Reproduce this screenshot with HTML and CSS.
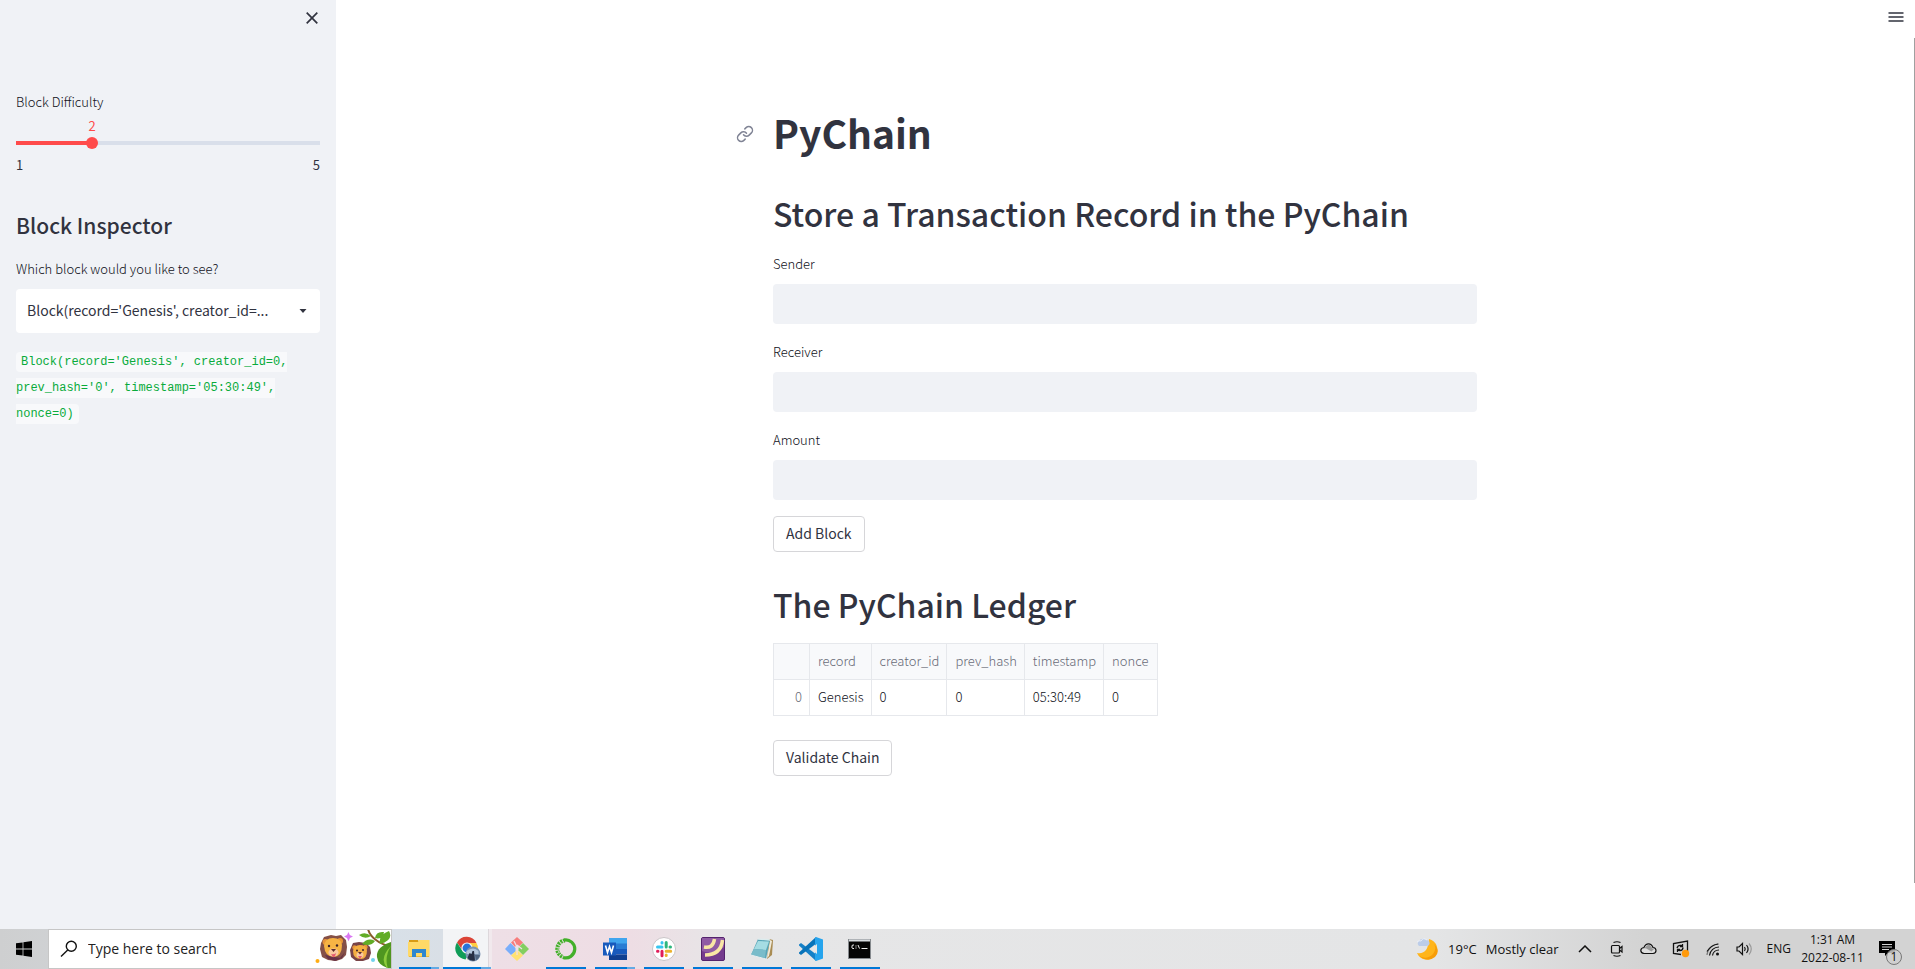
FILE: index.html
```html
<!DOCTYPE html>
<html lang="en">
<head>
<meta charset="utf-8">
<title>PyChain</title>
<link rel="stylesheet" href="styles.css">
</head>
<body>
<div class="app">
  <aside class="sidebar">
    <div class="sidebar-top">
      <button class="icon-button" aria-label="Close sidebar"><svg width="12" height="12" viewBox="0 0 12 12" fill="none" stroke="#31333f" stroke-width="1.7"><path d="M.7.7l10.6 10.6M11.3.7L.7 11.3"/></svg></button>
    </div>
    <label class="label" for="difficulty">Block Difficulty</label>
    <output class="slider-value" for="difficulty" style="width:50%">2</output>
    <div class="slider"><input id="difficulty" type="range" min="1" max="5" value="2"></div>
    <div class="slider-ticks"><span>1</span><span>5</span></div>
    <h2 class="sidebar-title">Block Inspector</h2>
    <label class="label" for="block">Which block would you like to see?</label>
    <div class="select-box">
      <select id="block"><option label="Block(record='Genesis', creator_id=...">Block(record='Genesis', creator_id=0, prev_hash='0', timestamp='05:30:49', nonce=0)</option></select>
      <svg class="caret" width="8" height="4" viewBox="0 0 8 4"><path d="M.5 0h7L4 4z" fill="#31333f"/></svg>
    </div>
    <p class="block-text"><code>Block(record='Genesis', creator_id=0, prev_hash='0', timestamp='05:30:49', nonce=0)</code></p>
  </aside>
  <main class="main">
    <button class="icon-button menu" aria-label="Menu"><svg width="16" height="12" viewBox="0 0 16 12" fill="none" stroke="#31333f" stroke-width="1.6"><path d="M.5 2h15M.5 6h15M.5 10h15"/></svg></button>
    <div class="scrollbar"></div>
    <div class="content">
      <h1 class="title"><a class="anchor" href="#pychain" aria-label="Link to heading"><svg width="18" height="18" viewBox="0 0 24 24" fill="none" stroke="#808495" stroke-width="2" stroke-linecap="round" stroke-linejoin="round"><path d="M10 13a5 5 0 0 0 7.54.54l3-3a5 5 0 0 0-7.07-7.07l-1.72 1.71"/><path d="M14 11a5 5 0 0 0-7.54-.54l-3 3a5 5 0 0 0 7.07 7.07l1.71-1.71"/></svg></a>PyChain</h1>
      <h2 class="heading">Store a Transaction Record in the PyChain</h2>
      <form class="form">
        <div class="field"><label class="label" for="sender">Sender</label><input id="sender" type="text"></div>
        <div class="field"><label class="label" for="receiver">Receiver</label><input id="receiver" type="text"></div>
        <div class="field"><label class="label" for="amount">Amount</label><input id="amount" type="text"></div>
        <button class="button" type="button">Add Block</button>
      </form>
      <h2 class="heading">The PyChain Ledger</h2>
      <table class="ledger">
        <thead><tr><th class="index"></th><th>record</th><th>creator_id</th><th>prev_hash</th><th>timestamp</th><th class="last">nonce</th></tr></thead>
        <tbody><tr><th class="index">0</th><td>Genesis</td><td>0</td><td>0</td><td>05:30:49</td><td class="last">0</td></tr></tbody>
      </table>
      <button class="button" type="button">Validate Chain</button>
    </div>
  </main>
</div>
<footer class="taskbar">
  <button class="start" aria-label="Start"><svg width="16" height="16" viewBox="0 0 16 16"><path d="M0 2.3L6.6 1.4v6.2H0zM7.4 1.3L16 0v7.6H7.4zM0 8.4h6.6v6.2L0 13.7zM7.4 8.4H16V16l-8.6-1.3z"/></svg></button>
  <div class="search">
    <svg width="18" height="18" viewBox="0 0 18 18" fill="none" stroke="#111" stroke-width="1.4"><circle cx="11.3" cy="6.3" r="5"/><path d="M7.7 9.9L1 16.6"/></svg>
    <input type="text" aria-label="Search" placeholder="Type here to search">
    <svg class="lions" width="76" height="40" viewBox="0 0 76 40">
      <path d="M9 8l7-2 5 1 5-1 5 5 1 7-1 8-4 4-6 2-8-1-6-3-2-8 1-6z" fill="#855047"/>
      <path d="M10 26l3 4 7 2 7-3 3-6-5 6z" fill="#673247"/>
      <circle cx="10.500" cy="13" r="3" fill="#e8953a"/><circle cx="25" cy="12" r="3" fill="#e8953a"/>
      <path d="M9 17q1-8 9-8t9 7q0 11-8 12-9 0-10-11z" fill="#f7b444"/>
      <ellipse cx="18.500" cy="23.500" rx="5" ry="4" fill="#f9c9a1"/><path d="M16 20h5l-2.500 3z" fill="#5c2b2b"/><path d="M16 25q3 1 5-1-1 5-3 4z" fill="#e65c71"/>
      <circle cx="14" cy="17" r="1.200" fill="#3b2028"/><circle cx="22" cy="16.500" r="1.200" fill="#3b2028"/>
      <path d="M38 14l6-1 7 1 4 4 1 6-2 6-6 2-7 0-5-4-1-7z" fill="#794447"/>
      <circle cx="39.500" cy="18.500" r="2.200" fill="#e8953a"/><circle cx="50.500" cy="18" r="2.200" fill="#e8953a"/>
      <path d="M38 22q1-6 7-6t7 5q0 9-6 9-8 0-8-8z" fill="#f4ae42"/><ellipse cx="45" cy="26" rx="3.500" ry="3" fill="#f9c9a1"/><path d="M43 23h4l-2 2.500z" fill="#5c2b2b"/><path d="M43 27h4l-2 3z" fill="#e65c71"/><circle cx="42" cy="21.500" r="1" fill="#3b2028"/><circle cx="48" cy="21" r="1" fill="#3b2028"/>
      <path d="M33.500 3l1.300 3 3.200 1.500-3 1.500-1.500 3.200L32 9 29 7.500 32 6z" fill="#db78f2"/>
      <circle cx="2.500" cy="32" r="2" fill="#ffad13"/><circle cx="58" cy="31" r="2" fill="#72d3ed"/>
      <path d="M53 0q3 12 23 18" fill="none" stroke="#8a5a2b" stroke-width="2"/>
      <path d="M56 7q-6-5-12-1 6 5 12 1zM60 12q-7-4-13 3 9 3 13-3zM60 9q1-7 9-6-1 8-9 6zM65 15q-2-9 9-13 5 9-9 13z" fill="#62ac26"/>
      <path d="M76 13q-15 5-14 15 1 9 14 12z" fill="#4f9620"/><path d="M76 17q-7 11-3 23-10-10 3-23z" fill="#8ccc3c"/>
    </svg>
  </div>
  <nav class="apps">
    <button class="app-button tinted split" aria-label="File Explorer"><svg width="22" height="22" viewBox="0 0 22 22"><path d="M1 2h9l1 2h10v15H1z" fill="#d89b13"/><path d="M0 4h10l1-2h10.500v16.500H0z" fill="#ffd967"/><path d="M4 19v-8h14v8h-4v-4H8v4z" fill="#2f87cf"/></svg></button>
    <button class="app-button active split" aria-label="Chrome"><svg width="26" height="26" viewBox="0 0 26 26"><path d="M2 6.500A11 11 0 0 1 21.500 7H11.500L8 15z" fill="#db4437"/><path d="M11.500 7h10A11 11 0 0 1 12 23.500l4.700-8z" fill="#ffcd40"/><path d="M2 6.500L7.500 15l6.500 2-3.500 6.400A11 11 0 0 1 2 6.500z" fill="#109d58"/><circle cx="12" cy="12" r="5.600" fill="#f4f6f8"/><circle cx="12" cy="12" r="4.400" fill="#2873d8"/><circle cx="18" cy="18" r="7.500" fill="#7b93b1"/><path d="M11.500 15q7-5 12 0v3h-12z" fill="#b4c7dd"/><path d="M12.500 22l2-5 2 1 1-3h1.500l1 9.500q-5 1-7.500-2.500z" fill="#283045"/><path d="M20 19h5q-1 4-4 5.500z" fill="#526681"/></svg></button>
    <button class="app-button idle" aria-label="Git"><svg width="24" height="24" viewBox="0 0 24 24"><path d="M12 0l6 5.500-4 4L12 8l-2 2-4-4.500z" fill="#f77d7c"/><path d="M5.500 6l5 5v3.500L6 18l-6-6z" fill="#79aefb"/><path d="M18 6l6 6-6 6-4.500-4.500v-3z" fill="#83cf60"/><path d="M12 13l6 5.500-6 5.500-6-5.500z" fill="#ffe272"/><path d="M9 4l3 6v8M12 8l5 4" stroke="#eedfe6" stroke-width="1.300" fill="none"/><circle cx="12" cy="10" r="1.600" fill="#eedfe6"/></svg></button>
    <button class="app-button" aria-label="Anaconda"><svg width="22" height="22" viewBox="0 0 22 22" fill="none" stroke="#43b02a"><path d="M9 2.100A9 9 0 1 1 8 19.500" stroke-width="3.200"/><path d="M10 2.500A8.500 8.500 0 0 0 8 19" stroke-width="4" stroke-dasharray="2 .8"/><path d="M9 3.500A8 8 0 0 0 7 18" stroke="#d7e9d1" stroke-width="1" stroke-dasharray="1 2"/></svg></button>
    <button class="app-button split" aria-label="Word"><svg width="26" height="24" viewBox="0 0 26 24"><path d="M7 1h18v6H7z" fill="#41a5ee"/><path d="M7 6.500h18V12H7z" fill="#2b7cd3"/><path d="M7 12h18v5.500H7z" fill="#185abd"/><path d="M7 17.500h18V23H7z" fill="#103f91"/><path d="M1 5.500h13v13H1z" fill="#185abd"/><path d="M3.500 8.500l2 7 2-6 2 6 2-7" fill="none" stroke="#fff" stroke-width="1.600"/></svg></button>
    <button class="app-button" aria-label="Slack"><svg width="24" height="24" viewBox="0 0 24 24"><circle cx="12" cy="12" r="11.500" fill="#fff" stroke="#c9c4c7"/><g fill="none" stroke-width="3" stroke-linecap="round"><path d="M10 5.500V6M5.500 10H10" stroke="#36c5f0"/><path d="M14.200 5.500V10M18.500 10H18" stroke="#2eb67d"/><path d="M14.200 14.200h4.500M14.200 18.500V18" stroke="#ecb22e"/><path d="M10 14.200v4.500M5.500 14.200H6" stroke="#e01e5a"/></g></svg></button>
    <button class="app-button" aria-label="Feed reader"><svg width="24" height="24" viewBox="0 0 24 24"><rect x=".5" y=".5" width="23" height="23" rx="1.500" fill="#753b8e" stroke="#54236d"/><path d="M1 1h22v9Q12 19 1 14z" fill="#a675b6" opacity=".55"/><path d="M3 10Q12 12 13.500 2M4 18Q20 18 21.500 3" fill="none" stroke="#f9e6a5" stroke-width="3.500"/></svg></button>
    <button class="app-button" aria-label="Notepad"><svg width="24" height="24" viewBox="0 0 24 24"><path d="M19 2l4 1-1 15-5 4z" fill="#a98c53"/><path d="M20 3l2 1-3 15-2 2z" fill="#efe9d9"/><path d="M8 2l12 1-4 19L1 18z" fill="#56a4b6"/><path d="M8 4l11 .5L16 13 4 12z" fill="#a5dce3"/><path d="M4 12l12 1-1 8L1 17.500z" fill="#79bcca"/><path d="M8 2l12 1" stroke="#dcebed" stroke-width="1.500"/><path d="M1 18l15 4" stroke="#e7eef0"/></svg></button>
    <button class="app-button" aria-label="Visual Studio Code"><svg width="24" height="24" viewBox="0 0 24 24"><path d="M0 7.500L2 6l16 12-1 6L0 8.500z" fill="#1580c7"/><path d="M0 16.500L2 18 18 6l-1-6L0 15.500z" fill="#0873b9"/><path d="M17 0l7 2.500v19L17 24l-1-1V1z" fill="#26a4ed"/><path d="M18 7v10l-6-5z" fill="#e8e8e9"/></svg></button>
    <button class="app-button" aria-label="Command Prompt"><svg width="23" height="20" viewBox="0 0 23 20"><rect x=".5" y=".5" width="22" height="19" fill="#050505" stroke="#85898d"/><path d="M1 1.500h21" stroke="#d8dde1" stroke-width="2"/><path d="M6 6H4.500L4 7v2l.5.500H6M8 6.500v1M8 8.500v1M10 6l1.500 3.500M13.500 9.500h6" fill="none" stroke="#eee"/></svg></button>
  </nav>
  <div class="tray">
    <button class="weather"><svg width="24" height="24" viewBox="0 0 24 24"><path d="M14 2a10.500 10.500 0 1 1-12 14Q13 18 14 2z" fill="#ffb51b"/><path d="M3 18q8 6 15-1 4-5 1-10 7 7 1 13-8 6-17-2z" fill="#f79d08"/><path d="M4 9a3.500 3.500 0 0 1 0-5A4.500 4.500 0 0 1 11 3q4 0 3.500 4-.5 2-3 2z" fill="#bccde9"/><path d="M2 5q2-2 4-1 2-4 6-1" stroke="#e9effa" fill="none"/></svg><span>19°C</span><span>Mostly clear</span></button>
    <button class="tray-icon" aria-label="Show hidden icons"><svg width="14" height="8" viewBox="0 0 14 8" fill="none" stroke="#111" stroke-width="1.500"><path d="M1 7l6-6 6 6"/></svg></button>
    <button class="tray-icon" aria-label="Meet now"><svg width="14" height="16" viewBox="0 0 14 16" fill="none" stroke="#111" stroke-width="1.200"><path d="M3.500 1.500Q7 0 10.500 1.500M3.500 14.500q3.500 1.500 7 0"/><rect x="1.500" y="4.500" width="8" height="7.500" rx="1"/><path d="M9.500 7.500l2.500-2v5.500l-2.500-2"/></svg></button>
    <button class="tray-icon" aria-label="OneDrive"><svg width="17" height="12" viewBox="0 0 17 12"><path d="M4 10.500Q.8 10 .8 7.500T4 4.500Q5.500.9 8.500.9T13 4.500q3 .3 3 3t-3 3z" fill="#dedede" stroke="#111" stroke-width="1.200"/><path d="M2 6q3-1.500 6 .5l3.500 2L14 6Q12 6 11.500 4 9-.5 5 4.500z" fill="#999"/></svg></button>
    <button class="tray-icon" aria-label="Updates"><svg width="18" height="18" viewBox="0 0 18 18" fill="none" stroke="#111" stroke-width="1.300"><path d="M9 14.500l-7.500-1V3.500l14-2.500v10"/><path d="M5 8q1-3 4-2.500l1.500.5M10.500 4v2.500H8M11 7.500q0 3-3 3L6 10M5.500 12V9.500H8"/><circle cx="13.500" cy="13.500" r="3.700" fill="#ff9a0c" stroke="none"/></svg></button>
    <button class="tray-icon" aria-label="Wi-Fi"><svg width="14" height="14" viewBox="0 0 14 14" fill="none" stroke="#111" stroke-width="1.200"><path d="M1 13A12 12 0 0 1 13 2" stroke="#777"/><path d="M3.500 13.500A9.500 9.500 0 0 1 13 5M6.500 13.500A6.500 6.500 0 0 1 13 8M1 9.500Q5 3 12 2"/><circle cx="11.500" cy="12" r="1.500" fill="#111" stroke="none"/></svg></button>
    <button class="tray-icon" aria-label="Volume"><svg width="17" height="14" viewBox="0 0 17 14" fill="none" stroke="#111" stroke-width="1.200"><path d="M1 5h2l3.500-3.500v11L3 9H1z"/><path d="M8.500 5q1.500 2 0 4M10.500 3q3.200 4 0 8"/><path d="M13 1.500q4.500 5.500 0 11" stroke="#999"/></svg></button>
    <button class="lang">ENG</button>
    <button class="clock"><span>1:31 AM</span><span>2022-08-11</span></button>
    <button class="notices" aria-label="Notifications"><svg width="16" height="16" viewBox="0 0 16 16"><path d="M0 0h16v12H9l-3 3v-3H0z"/><path d="M3 3.500h10M3 6h10M3 8.500h7" stroke="#d4d4d4"/></svg><span class="badge">1</span></button>
  </div>
</footer>
</body>
</html>
```

FILE: styles.css
```css
* { box-sizing: border-box; }

body {
  margin: 0;
  min-height: 100vh;
  display: flex;
  flex-direction: column;
  background: #fff;
  color: #31333f;
  font: 14px/24px "Noto Sans CJK KR", sans-serif;
}

button, input, select { font: inherit; color: inherit; }
button { padding: 0; border: 0; background: none; cursor: pointer; }
h1, h2, p { margin: 0; }
svg { display: block; flex: none; }

.app { flex: 1; display: flex; }

/* Sidebar */
.sidebar { width: 336px; padding: 0 16px; background: #f0f2f6; }
.sidebar-top { height: 90px; padding-top: 12px; display: flex; justify-content: flex-end; align-items: flex-start; }
.icon-button { padding: 0 2px; }
.label { display: block; font-size: 13px; font-weight: 300; line-height: 24px; color: #0e1018; }
.slider-value { display: block; margin-bottom: -2px; text-align: center; font-size: 13px; line-height: 24px; color: #ff4b4b; }
.slider {
  display: flex;
  height: 14px;
  background: linear-gradient(to right, #ff4b4b 25%, #d9dfea 25%) center / 100% 4px no-repeat;
}
.slider input { flex: 1; appearance: none; height: 14px; margin: 0 -6px; background: none; }
.slider input::-webkit-slider-thumb { appearance: none; width: 12px; height: 12px; border-radius: 50%; background: #ff4b4b; }
.slider-ticks { display: flex; justify-content: space-between; font-size: 13px; line-height: 30px; }
.sidebar-title { font-size: 21px; font-weight: 500; line-height: 32px; margin: 29px 0 16px; }
.select-box { position: relative; margin: 8px 0 16px; }
.select-box select {
  display: block;
  width: 100%;
  height: 44px;
  padding: 0 42px 2px 11px;
  appearance: none;
  border: 0;
  border-radius: 4px;
  background: #fff;
  text-overflow: ellipsis;
}
.caret { position: absolute; right: 13px; top: 20px; }
.block-text { font: 12px/26px "Liberation Mono", monospace; }
.block-text code {
  padding: 3px 5px;
  border-radius: 4px;
  background: #f8f9fb;
  color: #09ab3b;
  font: inherit;
}

/* Main column */
.main { flex: 1; position: relative; padding: 108px 17px 40px 16px; }
.menu { position: absolute; right: 9px; top: 11px; }
.scrollbar { position: absolute; right: 0; top: 38px; bottom: 46px; width: 1px; background: #a0a0a0; }
.content { max-width: 704px; margin: 0 auto; }
.title { position: relative; font-size: 39px; font-weight: 700; line-height: 48px; margin-bottom: 37px; }
.anchor { position: absolute; left: -37px; top: 17px; }
.heading { font-size: 32px; font-weight: 500; line-height: 40px; margin-bottom: 19px; }
.form { margin-bottom: 32px; }
.field { margin-bottom: 16px; }
.field .label { margin-bottom: 8px; }
.field input { display: block; width: 100%; height: 40px; padding: 0 12px; border: 0; border-radius: 4px; background: #f0f2f6; }
.button {
  display: block;
  height: 36px;
  padding: 0 12px 2px;
  border: 1px solid #d6d6d9;
  border-radius: 4px;
  background: #fff;
}

.ledger { border-collapse: collapse; font-size: 13px; line-height: 20px; margin-bottom: 24px; }
.ledger th, .ledger td { height: 36px; padding: 6px 7px 8px 8px; border: 1px solid #e6e8ec; text-align: left; font-weight: 300; color: #0e1018; }
.ledger th { color: #686b78; }
.ledger thead { background: #f8f9fb; }
.ledger .index { width: 36px; text-align: right; }
.ledger .last { padding-right: 9px; }

/* Taskbar */
.taskbar {
  display: flex;
  height: 40px;
  color: #111;
  font: 12px/18px "Open Sans", sans-serif;
  background: linear-gradient(to right, #cecfd0 0, #d8e0e8 392px, #d9dfe6 444px, #eedfe6 492px, #eedde4 630px, #e6e6e7 730px, #e4e5e6 75%, #d3d3d3 86%, #d3d3d3 100%);
}
.start { width: 48px; display: flex; align-items: center; justify-content: center; }
.search { display: flex; align-items: center; width: 344px; padding-left: 11px; gap: 10px; background: #fff; border: 1px solid #c6c6c6; overflow: hidden; }
.search input { flex: 1; min-width: 0; padding: 0; border: 0; background: none; font-size: 14px; }
.search input::placeholder { color: #222; opacity: 1; }
.apps { display: flex; margin-left: 2px; }
.app-button { position: relative; width: 49px; display: flex; align-items: center; justify-content: center; }
.app-button::after { content: ""; position: absolute; left: 5px; right: 4px; bottom: 0; height: 2px; background: #0078d7; }
.app-button.split::after { background: linear-gradient(to right, #0078d7 80%, #63aae4 80%); }
.app-button.idle::after { display: none; }
.app-button.active { background: linear-gradient(to right, #f3f4f6 45px, #c9c6ca 45px, #f1e9ed 46px); }
.app-button.active::after { left: 0; right: 1px; }
.tray { display: flex; align-items: center; margin-left: auto; padding-right: 11px; }
.weather { display: flex; align-items: center; gap: 9px; margin-right: 10px; font-size: 13px; }
.tray-icon { width: 32px; display: flex; justify-content: center; }
.lang { margin-left: 6px; }
.clock { display: flex; flex-direction: column; align-items: center; width: 83px; }
.notices { position: relative; width: 30px; padding-left: 5px; }
.badge {
  position: absolute;
  left: 12px;
  top: 8px;
  width: 16px;
  height: 16px;
  border: 1px solid #777;
  border-radius: 50%;
  background: #cfcfcfd9;
  font-size: 12px;
  line-height: 14px;
}
```
